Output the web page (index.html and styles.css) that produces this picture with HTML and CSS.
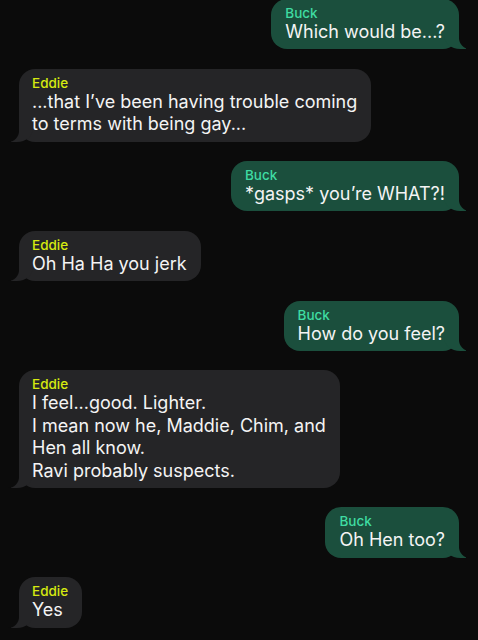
FILE: index.html
```html
<!DOCTYPE html>
<html>
<head>
    <meta charset="UTF-8">
    <title>Buck &amp; Eddie</title>
    <link rel="stylesheet" href="styles.css">
</head>
<body>

<div class="thread">
    <div class="msg buck">
        <div class="name">Buck</div>
        <div class="text">Which would be...?</div>
    </div>
    <div class="msg eddie">
        <div class="name">Eddie</div>
        <div class="text">...that I’ve been having trouble coming<br>to terms with being gay...</div>
    </div>
    <div class="msg buck">
        <div class="name">Buck</div>
        <div class="text">*gasps* you’re WHAT?!</div>
    </div>
    <div class="msg eddie">
        <div class="name">Eddie</div>
        <div class="text">Oh Ha Ha you jerk</div>
    </div>
    <div class="msg buck">
        <div class="name">Buck</div>
        <div class="text">How do you feel?</div>
    </div>
    <div class="msg eddie">
        <div class="name">Eddie</div>
        <div class="text">I feel...good. Lighter.<br>I mean now he, Maddie, Chim, and<br>Hen all know.<br>Ravi probably suspects.</div>
    </div>
    <div class="msg buck">
        <div class="name">Buck</div>
        <div class="text">Oh Hen too?</div>
    </div>
    <div class="msg eddie">
        <div class="name">Eddie</div>
        <div class="text">Yes</div>
    </div>
</div>

</body>
</html>
```
FILE: styles.css
```css
body {
    margin: 0;
    background: #0b0b0b;
    font-family: Inter, "Noto Sans", sans-serif;
    color: #f4f4f4;
}

.thread {
    display: flex;
    flex-direction: column;
    gap: 19.4px;
    padding: 0 19px;
    margin-top: -1px;
}

.msg {
    position: relative;
    z-index: 0;
    padding: 6px 14px;
    border-radius: 16px;
    max-width: 360px;
}

.msg.long {
    padding-right: 17px;
}

.name {
    font-size: 13.5px;
    line-height: 16px;
    font-weight: 500;
}

.text {
    font-size: 18px;
    line-height: 22.4px;
    white-space: nowrap;
}

/* incoming, grey, left */
.eddie {
    align-self: flex-start;
    background: #252527;
    padding-left: 13px;
}
.eddie .name {
    color: #d6ea10;
}
.eddie::before {
    content: "";
    position: absolute;
    z-index: -1;
    bottom: 0;
    left: -8px;
    width: 22px;
    height: 18px;
    background: #252527;
    border-bottom-right-radius: 16px 14px;
}
.eddie::after {
    content: "";
    position: absolute;
    z-index: -1;
    bottom: 0;
    left: -26px;
    width: 26px;
    height: 18px;
    background: #0b0b0b;
    border-bottom-right-radius: 11px;
}

/* outgoing, green, right */
.buck {
    align-self: flex-end;
    background: #1b4f3d;
}
.buck .name {
    color: #3fdca2;
}
.buck::before {
    content: "";
    position: absolute;
    z-index: -1;
    bottom: 0;
    right: -7px;
    width: 22px;
    height: 18px;
    background: #1b4f3d;
    border-bottom-left-radius: 16px 14px;
}
.buck::after {
    content: "";
    position: absolute;
    z-index: -1;
    bottom: 0;
    right: -26px;
    width: 26px;
    height: 18px;
    background: #0b0b0b;
    border-bottom-left-radius: 11px;
}
```
